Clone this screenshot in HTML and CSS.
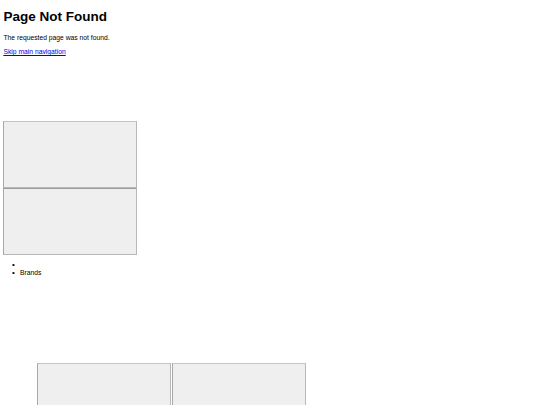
FILE: index.html
```html
<!DOCTYPE html>
<html lang="en">
<head>
<meta charset="utf-8">
<title>Page Not Found</title>
<link rel="stylesheet" href="styles.css">
</head>
<body>
<h1 class="title">Page Not Found</h1>
<p class="message">The requested page was not found.</p>
<p class="skip"><a href="#main">Skip main navigation</a></p>
<div class="stack">
  <div class="frame"></div>
  <div class="frame"></div>
</div>
<ul class="menu">
  <li></li>
  <li>Brands</li>
</ul>
<div class="row">
  <div class="frame"></div>
  <div class="frame"></div>
</div>
</body>
</html>
```

FILE: styles.css
```css
html, body {
  background: #ffffff;
}
body {
  margin: 3.4px;
  font-family: "Liberation Sans", Arial, sans-serif;
  font-size: 6.75px;
  color: #000;
}
.title {
  font-size: 13.5px;
  font-weight: bold;
  margin: 6px 0 10px;
}
.message,
.skip {
  margin: 6.75px 0;
}
.skip a {
  color: #0000ee;
}
.stack {
  margin-top: 66px;
  display: flex;
  flex-direction: column;
  width: 134px;
}
.frame {
  box-sizing: border-box;
  width: 134px;
  height: 67px;
  background: #efefef;
  border: 1px solid #b8b8b8;
  border-left-color: #a8a8a8;
  border-top-color: #c4c4c4;
}
.stack .frame + .frame {
  border-top-color: #9c9c9c;
}
.menu {
  margin: 6px 0 5px;
  padding-left: 16.6px;
  list-style: none;
}
.menu li {
  line-height: 8px;
}
.menu li::before {
  content: "\2022";
  display: inline-block;
  width: 8px;
  margin-left: -8px;
  font-size: 8px;
}
.row {
  display: flex;
  gap: 1px;
  margin-top: 86px;
  margin-left: 34px;
}
```
